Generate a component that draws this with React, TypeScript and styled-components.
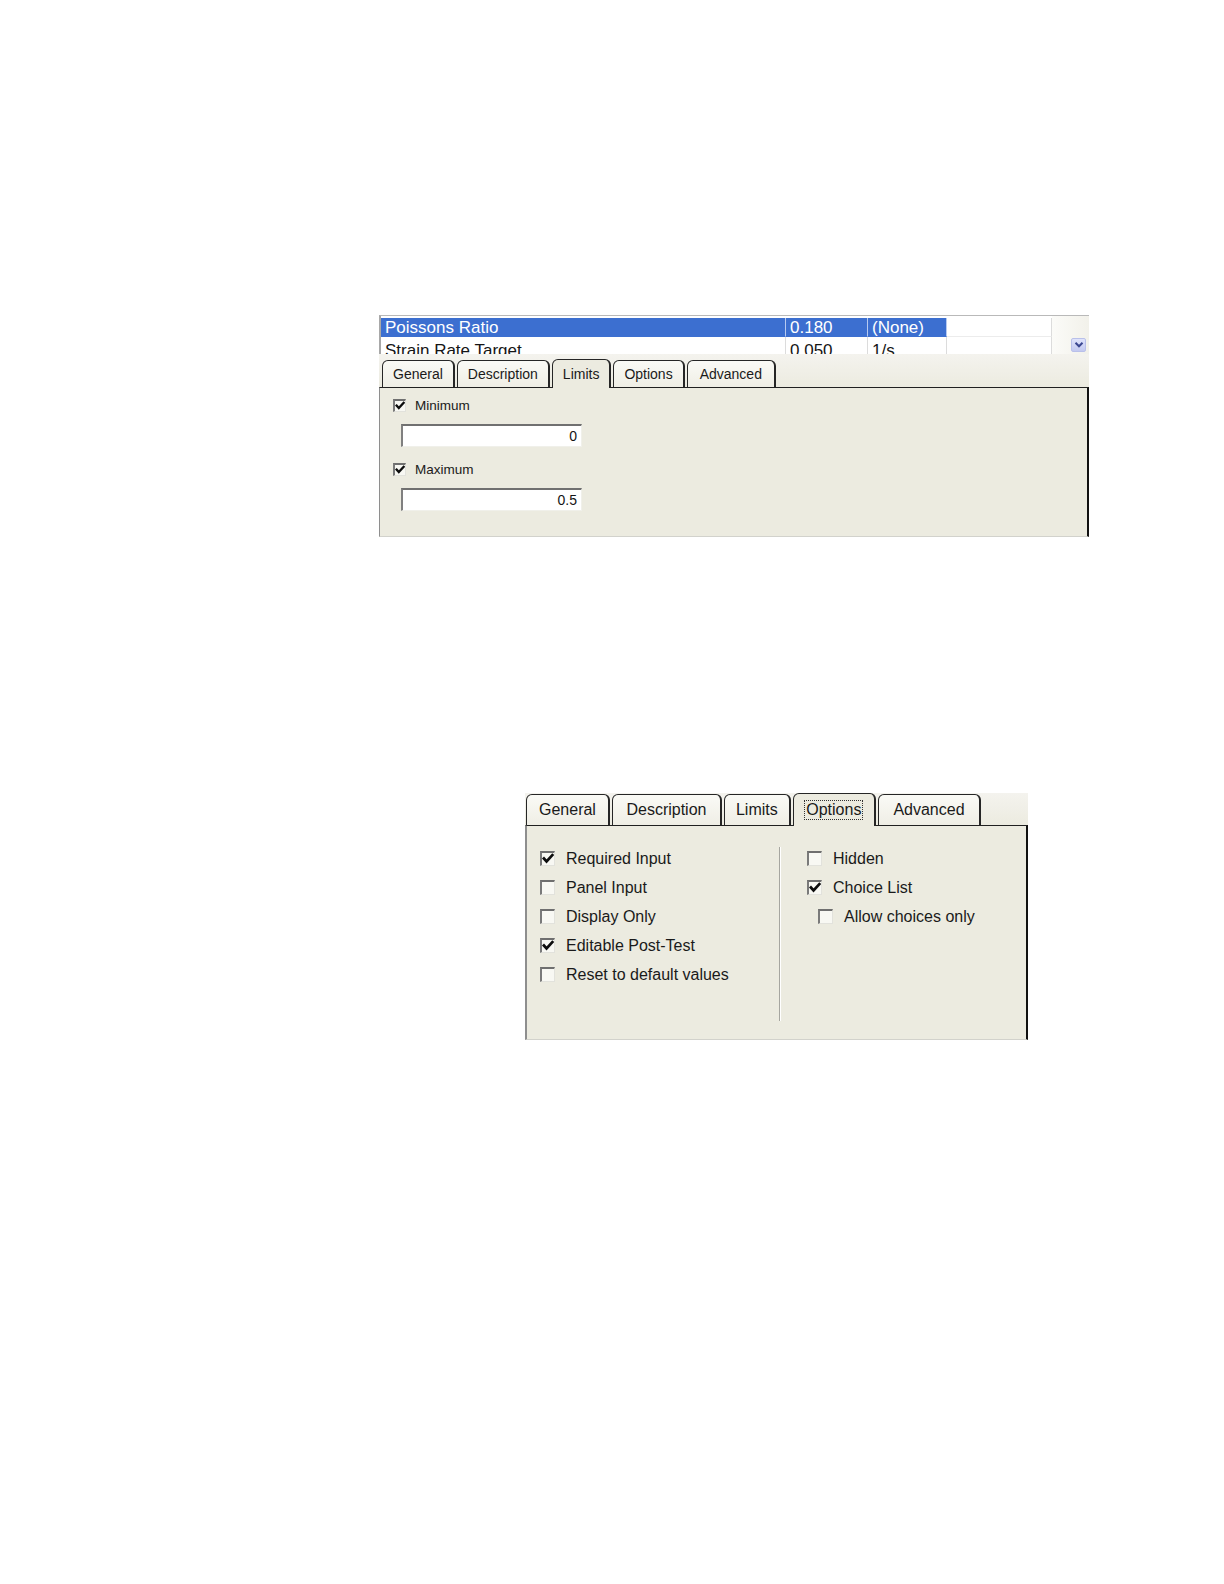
import React from 'react';
import styled, { createGlobalStyle, css } from 'styled-components';

// --- Global ---
const GlobalStyle = createGlobalStyle`
  html, body { margin: 0; padding: 0; background: #ffffff; }
  body { font-family: "Liberation Sans", Arial, sans-serif; color: #141414; }
`;

const Page = styled.div`
  width: 1224px;
  min-height: 1584px;
  display: flex;
  flex-direction: column;
`;

const Figure = styled.div<{ $top: number; $left: number; $width: number }>`
  margin-top: ${p => p.$top}px;
  margin-left: ${p => p.$left}px;
  width: ${p => p.$width}px;
  display: flex;
  flex-direction: column;
`;

// --- Property grid (top of first shot) ---
const Grid = styled.div`
  height: 39px;
  display: flex;
  box-sizing: border-box;
  border-top: 1px solid #b9b9b9;
  border-left: 2px solid #a8a8a8;
  background: #ffffff;
  overflow: hidden;
`;
const Rows = styled.div`
  display: flex;
  flex-direction: column;
  padding-top: 2px;
`;
const Row = styled.div<{ $h: number }>`
  display: flex;
  height: ${p => p.$h}px;
  flex: none;
`;
const Cell = styled.div<{ $w: number; $selected?: boolean; $lh: number }>`
  width: ${p => p.$w}px;
  box-sizing: border-box;
  padding-left: 4px;
  font-size: 17px;
  line-height: ${p => p.$lh}px;
  white-space: nowrap;
  overflow: hidden;
  background: ${p => (p.$selected ? '#3c6fd0' : '#ffffff')};
  color: ${p => (p.$selected ? '#ffffff' : '#151515')};
  border-right: 1px solid ${p => (p.$selected ? '#b7caf0' : '#dcdcdc')};
  border-bottom: 1px solid ${p => (p.$selected ? '#3c6fd0' : '#ececec')};
`;
const ScrollArea = styled.div`
  flex: 1;
  display: flex;
  justify-content: flex-end;
  align-items: flex-start;
  padding: 22px 3px 0 0;
  background: linear-gradient(90deg, #fbfbf8, #f2f1ea);
`;
const DropButton = styled.div`
  width: 15px;
  height: 14px;
  box-sizing: border-box;
  border: 1px solid #b9c0ea;
  border-radius: 2px;
  background: linear-gradient(180deg, #dfe3fb, #c3c9f0);
  display: flex;
  align-items: center;
  justify-content: center;
`;

// --- Tabs ---
const TabStrip = styled.div<{ $h: number; $pad: number; $gap: number }>`
  height: ${p => p.$h}px;
  display: flex;
  align-items: flex-end;
  gap: ${p => p.$gap}px;
  padding-left: ${p => p.$pad}px;
  background: linear-gradient(180deg, #f4f3ee, #ecebe0);
`;
const Tab = styled.div<{ $active?: boolean; $h: number; $size: number; $pad: number }>`
  position: relative;
  box-sizing: border-box;
  height: ${p => p.$h}px;
  padding: 0 ${p => p.$pad}px;
  display: flex;
  align-items: center;
  font-size: ${p => p.$size}px;
  color: #1a1a1a;
  border: 1px solid #262626;
  border-right-width: 2px;
  border-bottom: none;
  border-radius: 6px 6px 0 0;
  background: linear-gradient(180deg, #fafaf6, #efeee5);
  ${p =>
    p.$active &&
    css`
      height: ${p.$h + 2}px;
      margin-bottom: -1px;
      z-index: 1;
      background: #ecebe0;
    `}
`;
const FocusText = styled.span`
  outline: 1px dotted #333;
  outline-offset: 0;
  padding: 0 1px;
`;
const Body = styled.div<{ $h: number; $left: number }>`
  height: ${p => p.$h}px;
  box-sizing: border-box;
  background: #ecebe0;
  border-top: 1px solid #202020;
  border-left: ${p => p.$left}px solid #8e8e8e;
  border-right: 2px solid #111111;
  border-bottom: 1px solid #d2d2cc;
`;

// --- Limits tab ---
const LimitsBody = styled(Body)`
  padding: 11px 0 0 13px;
  display: flex;
  flex-direction: column;
`;
const LimitGroup = styled.div`
  display: flex;
  flex-direction: column;
  & + & { margin-top: 16px; }
`;
const CheckRow = styled.div<{ $h: number; $gap: number; $size: number; $indent?: number }>`
  display: flex;
  align-items: center;
  height: ${p => p.$h}px;
  gap: ${p => p.$gap}px;
  font-size: ${p => p.$size}px;
  margin-left: ${p => p.$indent || 0}px;
  color: #1a1a1a;
  white-space: nowrap;
`;
const Box = styled.div<{ $size: number }>`
  width: ${p => p.$size}px;
  height: ${p => p.$size}px;
  flex: none;
  box-sizing: border-box;
  background: #f8f8f3;
  border-top: 2px solid #6f6f6f;
  border-left: 2px solid #7a7a7a;
  border-right: 1px solid #e2e2dc;
  border-bottom: 1px solid #e2e2dc;
  display: flex;
  align-items: center;
  justify-content: center;
`;
const NumberField = styled.div`
  margin: 12px 0 0 8px;
  width: 181px;
  height: 23px;
  box-sizing: border-box;
  background: #ffffff;
  border-top: 2px solid #707070;
  border-left: 2px solid #808080;
  border-right: 1px solid #f0f0ea;
  border-bottom: 1px solid #f0f0ea;
  font-size: 14px;
  line-height: 20px;
  text-align: right;
  padding-right: 4px;
`;

// --- Options tab ---
const OptionsBody = styled(Body)`
  padding: 18px 0 0 13px;
  display: flex;
  align-items: flex-start;
`;
const Column = styled.div<{ $w?: number; $pad?: number }>`
  ${p => (p.$w ? `width: ${p.$w}px;` : 'flex: 1;')}
  padding-left: ${p => p.$pad || 0}px;
  display: flex;
  flex-direction: column;
`;
const Separator = styled.div`
  width: 1px;
  height: 174px;
  margin-top: 3px;
  background: #a6a6a0;
  box-shadow: 1px 0 0 #ffffff;
`;

// --- Icons ---
const Check = ({ size }: { size: number }) => (
  <svg width={size - 3} height={size - 3} viewBox="0 0 10 10">
    <path d="M1.6 4.6 L3.8 7 L8.6 1.8" fill="none" stroke="#0d0d0d" strokeWidth="2.3" strokeLinecap="square" />
  </svg>
);
const ChevronDown = () => (
  <svg width="10" height="8" viewBox="0 0 10 8">
    <path d="M1.5 1.8 L5 5.3 L8.5 1.8" fill="none" stroke="#3b4790" strokeWidth="2" />
  </svg>
);

type CheckProps = { label: string; checked?: boolean; size: number; box: number; h: number; gap: number; indent?: number };
const CheckItem = ({ label, checked, size, box, h, gap, indent }: CheckProps) => (
  <CheckRow $h={h} $gap={gap} $size={size} $indent={indent}>
    <Box $size={box}>{checked && <Check size={box} />}</Box>
    <span>{label}</span>
  </CheckRow>
);

const TABS = ['General', 'Description', 'Limits', 'Options', 'Advanced'];
const COLS = [405, 82, 79, 105];

// horizontal padding of each tab, per figure (the source font runs a bit wider on some labels)
const SMALL_PAD: Record<string, number> = { General: 10, Description: 10, Limits: 10, Options: 10, Advanced: 12 };
const LARGE_PAD: Record<string, number> = { General: 12, Description: 13.5, Limits: 11, Options: 11.5, Advanced: 14.5 };

const gridRows = [
  { cells: ['Poissons Ratio', '0.180', '(None)', ''], selected: true, h: 19, lh: 19 },
  { cells: ['Strain Rate Target', '0.050', '1/s', ''], selected: false, h: 24, lh: 28 },
];

const leftOptions = [
  { label: 'Required Input', checked: true },
  { label: 'Panel Input', checked: false },
  { label: 'Display Only', checked: false },
  { label: 'Editable Post-Test', checked: true },
  { label: 'Reset to default values', checked: false },
];

export default function App() {
  return (
    <>
      <GlobalStyle />
      <Page>
        <Figure $top={315} $left={379} $width={710}>
          <Grid>
            <Rows>
              {gridRows.map(r => (
                <Row key={r.cells[0]} $h={r.h}>
                  {r.cells.map((c, i) => (
                    <Cell key={i} $w={COLS[i]} $lh={r.lh} $selected={r.selected && i < 3}>
                      {c}
                    </Cell>
                  ))}
                </Row>
              ))}
            </Rows>
            <ScrollArea>
              <DropButton>
                <ChevronDown />
              </DropButton>
            </ScrollArea>
          </Grid>
          <TabStrip $h={33} $pad={3} $gap={2}>
            {TABS.map(t => (
              <Tab key={t} $h={27} $size={14} $pad={SMALL_PAD[t]} $active={t === 'Limits'}>
                {t}
              </Tab>
            ))}
          </TabStrip>
          <LimitsBody $h={150} $left={1}>
            <LimitGroup>
              <CheckItem label="Minimum" checked size={13.5} box={13} h={13} gap={9} />
              <NumberField>0</NumberField>
            </LimitGroup>
            <LimitGroup>
              <CheckItem label="Maximum" checked size={13.5} box={13} h={13} gap={9} />
              <NumberField>0.5</NumberField>
            </LimitGroup>
          </LimitsBody>
        </Figure>

        <Figure $top={256} $left={525} $width={503}>
          <TabStrip $h={32} $pad={1} $gap={2}>
            {TABS.map(t => (
              <Tab key={t} $h={31} $size={16} $pad={LARGE_PAD[t]} $active={t === 'Options'}>
                {t === 'Options' ? <FocusText>{t}</FocusText> : t}
              </Tab>
            ))}
          </TabStrip>
          <OptionsBody $h={215} $left={2}>
            <Column $w={239}>
              {leftOptions.map(o => (
                <CheckItem key={o.label} label={o.label} checked={o.checked} size={16} box={15} h={29} gap={11} />
              ))}
            </Column>
            <Separator />
            <Column $pad={27}>
              <CheckItem label="Hidden" size={16} box={15} h={29} gap={11} />
              <CheckItem label="Choice List" checked size={16} box={15} h={29} gap={11} />
              <CheckItem label="Allow choices only" size={16} box={15} h={29} gap={11} indent={11} />
            </Column>
          </OptionsBody>
        </Figure>
      </Page>
    </>
  );
}
